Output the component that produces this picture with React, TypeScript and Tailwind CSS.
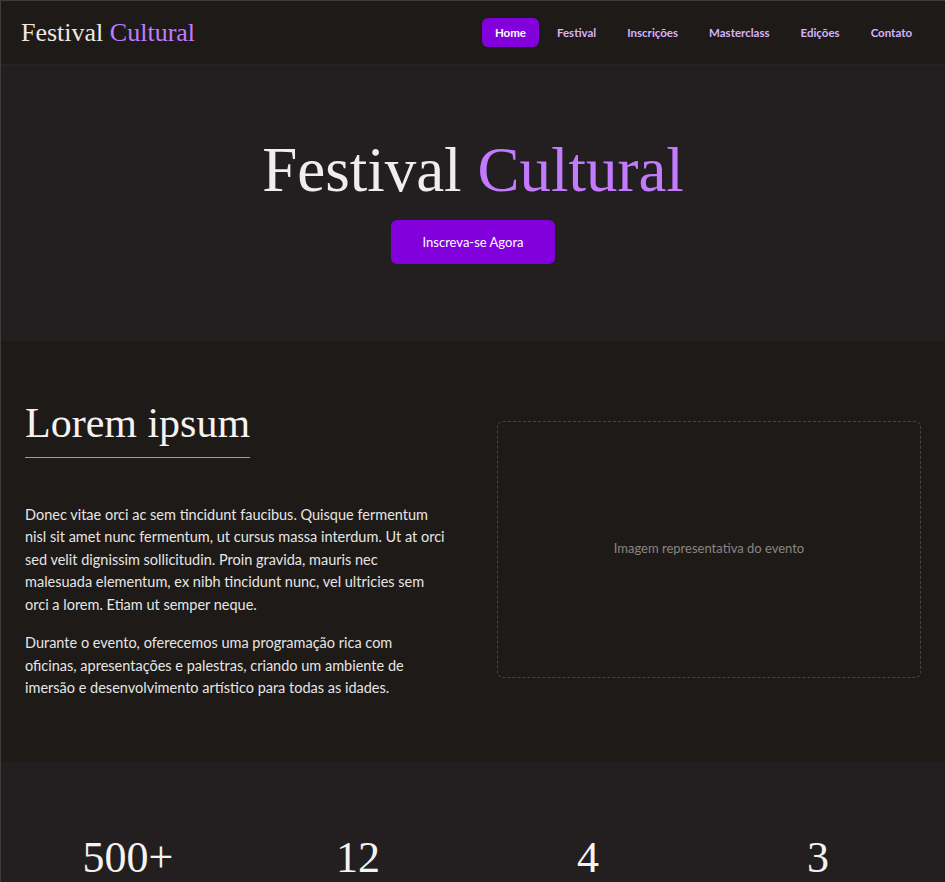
import { FC } from "react";

const navItems = ["Home", "Festival", "Inscrições", "Masterclass", "Edições", "Contato"];

const stats = ["500+", "12", "4", "3"];

const serif = "font-['Liberation_Serif',Georgia,serif]";

const App: FC = () => {
  return (
    <div className="min-h-screen bg-[#1e1a18] border-t border-l border-[#3d3d3d] font-['Lato',sans-serif] text-[#e7e5e4]">
      <header className="flex items-center justify-between h-16 px-5 bg-[#1e1a18] border-b border-[#282323]">
        <a className={`${serif} text-[26px] text-[#ebe8e6]`}>
          Festival <span className="text-[#c27aff]">Cultural</span>
        </a>
        <nav className="flex items-center gap-[5px]">
          {navItems.map((item, i) => (
            <a
              key={item}
              className={
                i === 0
                  ? "px-[13px] py-[6px] rounded-md bg-[#8200db] text-white text-[11.5px] font-bold"
                  : "px-[13px] py-[6px] rounded-md text-[#d6b4f8] text-[11.5px] font-bold"
              }
            >
              {item}
            </a>
          ))}
        </nav>
      </header>

      <section className="bg-[#231f20] pt-[72px] pb-[77px] flex flex-col items-center">
        <h1 className={`${serif} text-[63px] leading-[1.07] text-[#f0eeec] mb-4`}>
          Festival <span className="text-[#c27aff]">Cultural</span>
        </h1>
        <button className="px-8 py-3 rounded-md bg-[#8200db] text-white text-[13px] leading-5">
          Inscreva-se Agora
        </button>
      </section>

      <section className="bg-[#1e1a18] px-6 pt-[57px] pb-[62px]">
        <div className="grid grid-cols-2 gap-12 items-center">
          <div>
            <div className="w-fit mb-[46px]">
              <h2 className={`${serif} text-[42px] leading-[1.2] text-[#f5f3f1] pb-2`}>
                Lorem ipsum
              </h2>
              <div className="h-px bg-[#c27aff]" />
            </div>
            <div className="max-w-[421px] text-[14.5px] leading-[22.5px] space-y-4">
              <p>
                Donec vitae orci ac sem tincidunt faucibus. Quisque fermentum nisl sit amet nunc
                fermentum, ut cursus massa interdum. Ut at orci sed velit dignissim sollicitudin.
                Proin gravida, mauris nec malesuada elementum, ex nibh tincidunt nunc, vel
                ultricies sem orci a lorem. Etiam ut semper neque.
              </p>
              <p>
                Durante o evento, oferecemos uma programação rica com oficinas, apresentações e
                palestras, criando um ambiente de imersão e desenvolvimento artístico para todas
                as idades.
              </p>
            </div>
          </div>
          <div className="h-[257px] rounded-md border border-dashed border-[#4a4543] flex items-center justify-center text-[13px] text-[#8a8580]">
            Imagem representativa do evento
          </div>
        </div>
      </section>

      <section className="bg-[#231f20] px-6 pt-[72px] pb-20">
        <div className="grid grid-cols-4 gap-6 text-center">
          {stats.map((s) => (
            <div key={s} className={`${serif} text-[44px] leading-[1.1] text-[#f5f3f1]`}>
              {s}
            </div>
          ))}
        </div>
      </section>
    </div>
  );
};

export default App;
